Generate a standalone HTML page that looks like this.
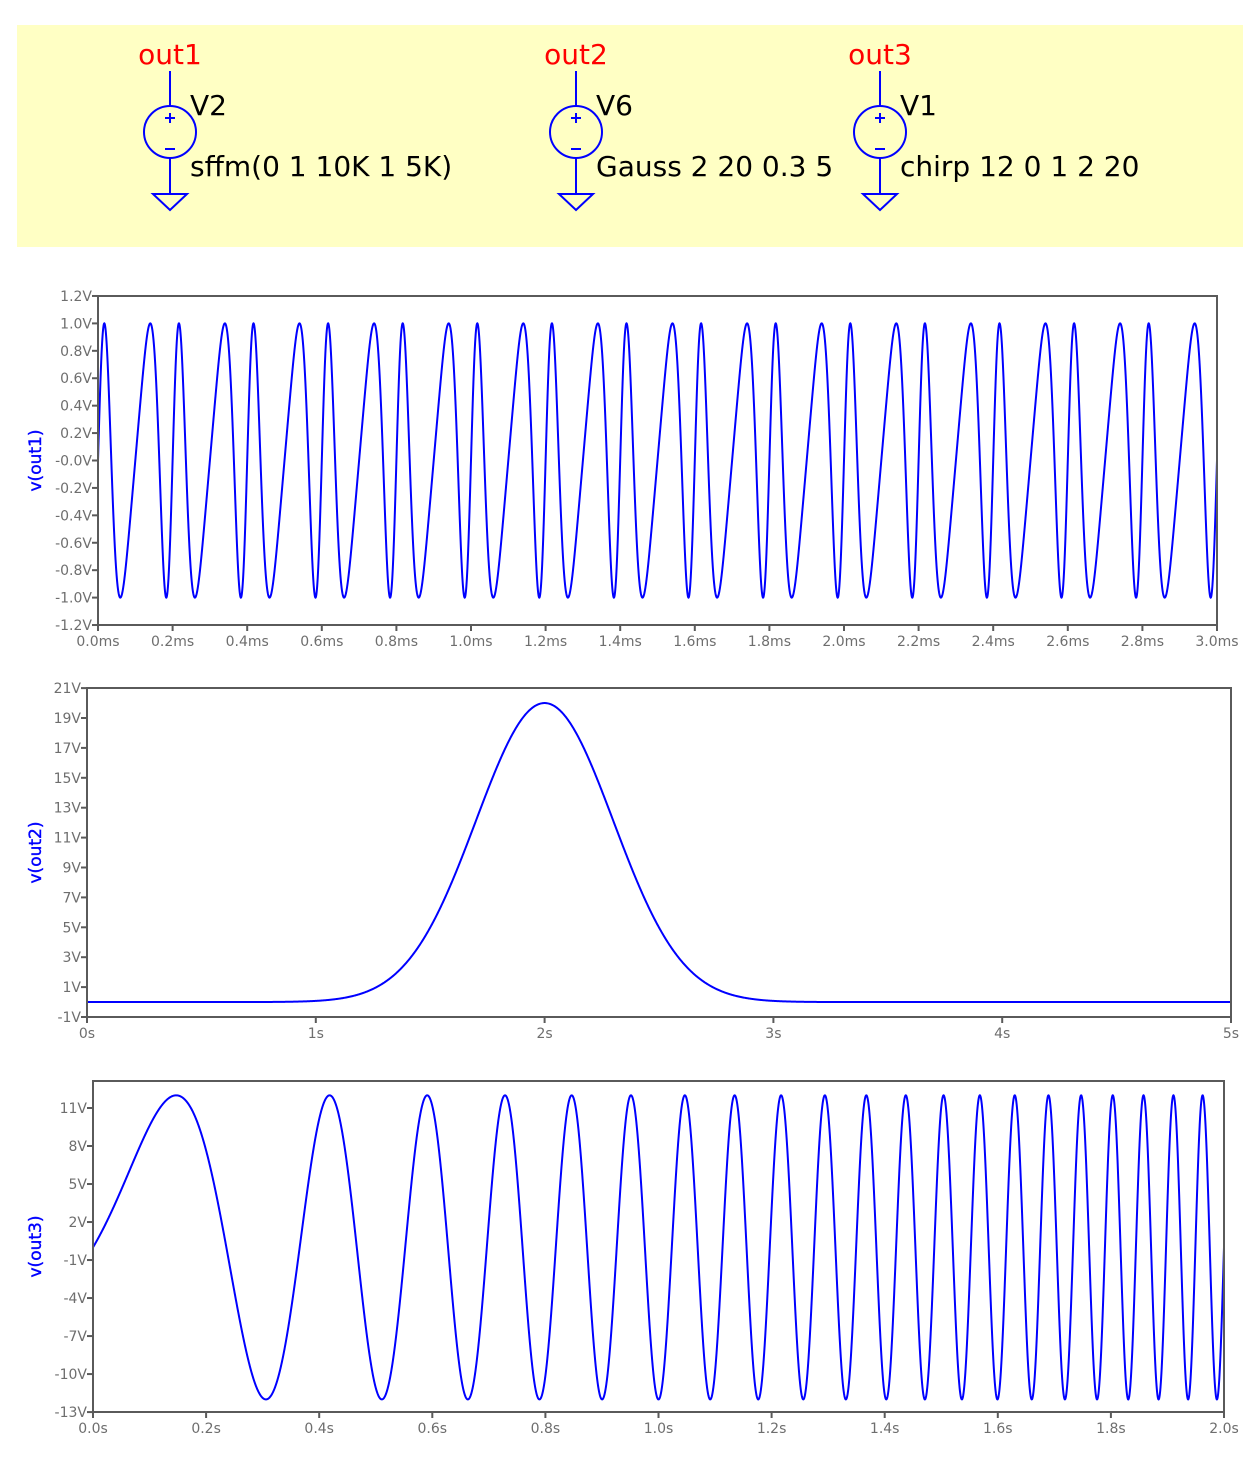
<!DOCTYPE html>
<html><head><meta charset="utf-8"><style>
body{margin:0;background:#fff;width:1260px;height:1460px;overflow:hidden}
svg{display:block}
.t{font-family:"DejaVu Sans",sans-serif;font-size:14px;fill:#6e6e6e}
.lab{font-family:"DejaVu Sans",sans-serif;font-size:17px;fill:#0000ff;stroke:#0000ff;stroke-width:0.4}
.sch{font-family:"DejaVu Sans",sans-serif;font-size:28px}
</style></head><body>
<svg id="s" width="1260" height="1460" xmlns="http://www.w3.org/2000/svg">
<rect x="17" y="25" width="1226" height="222" fill="#ffffc4"/>
<g id="sch"></g>
<g id="plots"></g>
</svg>
<script>
var NS="http://www.w3.org/2000/svg";
function el(p,n,a,txt){var e=document.createElementNS(NS,n);for(var k in a)e.setAttribute(k,a[k]);if(txt!==undefined)e.textContent=txt;p.appendChild(e);return e;}
var sch=document.getElementById('sch');
[[170,"out1","V2","sffm(0 1 10K 1 5K)"],[576,"out2","V6","Gauss 2 20 0.3 5"],[880,"out3","V1","chirp 12 0 1 2 20"]].forEach(function(c){
 var x=c[0];
 el(sch,'text',{x:x,y:64,'text-anchor':'middle','class':'sch',fill:'#ff0000'},c[1]);
 el(sch,'line',{x1:x,y1:71,x2:x,y2:106,stroke:'#0000ff','stroke-width':2});
 el(sch,'circle',{cx:x,cy:132,r:26,fill:'none',stroke:'#0000ff','stroke-width':2});
 el(sch,'line',{x1:x-5,y1:118,x2:x+5,y2:118,stroke:'#0000ff','stroke-width':2});
 el(sch,'line',{x1:x,y1:113,x2:x,y2:123,stroke:'#0000ff','stroke-width':2});
 el(sch,'line',{x1:x-5,y1:149,x2:x+5,y2:149,stroke:'#0000ff','stroke-width':2});
 el(sch,'line',{x1:x,y1:158,x2:x,y2:194,stroke:'#0000ff','stroke-width':2});
 el(sch,'path',{d:'M'+(x-17)+' 194 L'+(x+17)+' 194 L'+x+' 210 Z',fill:'none',stroke:'#0000ff','stroke-width':2});
 el(sch,'text',{x:x+20,y:115,'class':'sch',fill:'#000'},c[2]);
 el(sch,'text',{x:x+20,y:176,'class':'sch',fill:'#000'},c[3]);
});
var P=document.getElementById('plots');
function plot(o){
 var g=el(P,'g',{});
 var X=function(t){return o.x0+(t-o.t0)/(o.t1-o.t0)*(o.x1-o.x0)};
 var Y=function(v){return o.yref+(o.vref-v)*o.ppv};
 var d='',N=o.n;
 for(var i=0;i<=N;i++){var t=o.t0+(o.t1-o.t0)*i/N;d+=(i?'L':'M')+X(t).toFixed(2)+' '+Y(o.f(t)).toFixed(2);}
 el(g,'path',{d:d,fill:'none',stroke:'#0000ff','stroke-width':2});
 el(g,'rect',{x:o.x0,y:o.ytop,width:o.x1-o.x0,height:o.ybot-o.ytop,fill:'none',stroke:'#5a5a5a','stroke-width':2});
 o.yt.forEach(function(v){var y=Y(v[0]);el(g,'line',{x1:o.x0-6,y1:y,x2:o.x0,y2:y,stroke:'#5a5a5a','stroke-width':2});
  el(g,'text',{x:o.x0-6,y:y+5,'text-anchor':'end','class':'t'},v[1]);});
 o.xt.forEach(function(v){var x=X(v[0]);el(g,'line',{x1:x,y1:o.ybot,x2:x,y2:o.ybot+6,stroke:'#5a5a5a','stroke-width':2});
  el(g,'text',{x:x,y:o.ybot+21,'text-anchor':'middle','class':'t'},v[1]);});
 var cy=(o.ytop+o.ybot)/2;
 el(g,'text',{x:41,y:cy,'text-anchor':'middle','class':'lab',transform:'rotate(-90 41 '+cy+')'},o.lab);
}
var yt1=[],xt1=[];
for(var i=-6;i<=6;i++){var v=i*0.2;yt1.push([v,(i==0?'-0.0':(v.toFixed(1)))+'V']);}
for(var i=0;i<=15;i++){xt1.push([i*0.2,(i*0.2).toFixed(1)+'ms']);}
plot({x0:98,x1:1217,t0:0,t1:3,ytop:296,ybot:625,yref:460.5,vref:0,ppv:137.1,n:6000,
 f:function(t){var s=t*1e-3;return Math.sin(2*Math.PI*1e4*s+Math.sin(2*Math.PI*5e3*s));},yt:yt1,xt:xt1,lab:'v(out1)'});
var yt2=[],xt2=[];
for(var v=-1;v<=21;v+=2)yt2.push([v,v+'V']);
for(var i=0;i<=5;i++)xt2.push([i,i+'s']);
plot({x0:87,x1:1231,t0:0,t1:5,ytop:688,ybot:1017,yref:1017,vref:-1,ppv:14.95,n:2000,
 f:function(t){return 20*Math.exp(-(t-2)*(t-2)/(2*0.09));},yt:yt2,xt:xt2,lab:'v(out2)'});
var yt3=[],xt3=[];
for(var v=-13;v<=11;v+=3)yt3.push([v,v+'V']);
for(var i=0;i<=10;i++)xt3.push([i*0.2,(i*0.2).toFixed(1)+'s']);
plot({x0:93,x1:1224,t0:0,t1:2,ytop:1081,ybot:1412,yref:1108,vref:11,ppv:12.67,n:6000,
 f:function(t){return 12*Math.sin(2*Math.PI*(t+4.75*t*t));},yt:yt3,xt:xt3,lab:'v(out3)'});
</script>
</body></html>
